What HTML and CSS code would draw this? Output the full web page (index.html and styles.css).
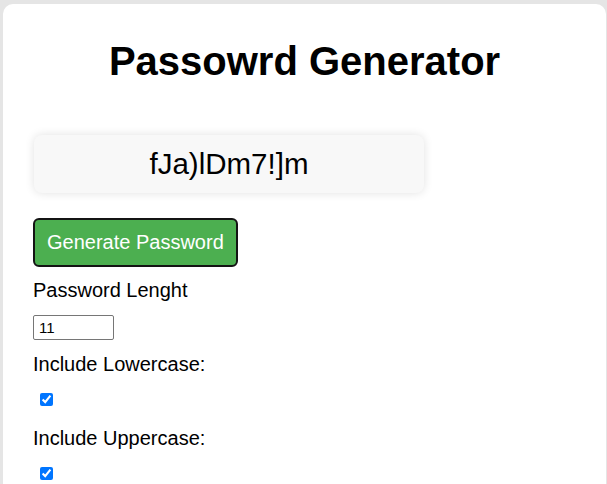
FILE: index.html
```html
<!DOCTYPE html>
<html lang="en">
<head>
<meta charset="UTF-8">
<title>Password Generator</title>
<link rel="stylesheet" href="styles.css">
</head>
<body>
<main class="card">
  <h1 class="title">Passowrd Generator</h1>
  <div class="display">fJa)lDm7!]m</div>
  <button class="generate" type="button">Generate Password</button>
  <label class="label label-first" for="len">Password Lenght</label>
  <input class="length" id="len" type="number" value="11">
  <label class="label" for="lower">Include Lowercase:</label>
  <input class="check" id="lower" type="checkbox" checked>
  <label class="label label-after-check" for="upper">Include Uppercase:</label>
  <input class="check" id="upper" type="checkbox" checked>
</main>
</body>
</html>
```
FILE: styles.css
```css
html, body {
  margin: 0;
  height: 100%;
}
body {
  background: #e5e5e5;
  padding: 4px 1px 0 3px;
  box-sizing: border-box;
  font-family: "Liberation Sans", Arial, sans-serif;
  overflow: hidden;
}
.card {
  background: #ffffff;
  border-radius: 10px;
  padding: 34px 30px 40px 30px;
  min-height: 600px;
  display: flex;
  flex-direction: column;
  align-items: flex-start;
}
.title {
  margin: 0;
  align-self: stretch;
  text-align: center;
  font-size: 40px;
  font-weight: bold;
  line-height: 46px;
  color: #000;
}
.display {
  margin: 51px 0 0 1px;
  width: 390px;
  box-sizing: border-box;
  padding: 12px 10px 12px 10px;
  height: 58px;
  background: #f8f8f8;
  border-radius: 8px;
  box-shadow: 0 0 10px rgba(0, 0, 0, 0.12);
  text-align: center;
  font-size: 29.5px;
  line-height: 34px;
  color: #000;
}
.generate {
  margin-top: 25px;
  background: #4caf50;
  color: #fff;
  border: 2px solid #141414;
  border-radius: 6px;
  font-family: "Liberation Sans", Arial, sans-serif;
  font-size: 20px;
  line-height: 23px;
  padding: 11px 12px;
  height: 49px;
  box-sizing: border-box;
  white-space: nowrap;
  cursor: pointer;
}
.label {
  display: block;
  margin-top: 13px;
  font-size: 20px;
  line-height: 23px;
  color: #000;
}
.label-first {
  margin-top: 12px;
}
.label-after-check {
  margin-top: 21px;
}
.length {
  margin: 13px 0 0 0;
  width: 81px;
  height: 25px;
  box-sizing: border-box;
  border: 1px solid #767676;
  border-radius: 2px;
  padding: 1px 5px;
  font-family: "Liberation Sans", Arial, sans-serif;
  font-size: 15px;
  color: #000;
}
.check {
  margin: 17px 0 0 7px;
  width: 13px;
  height: 13px;
  accent-color: #0075ff;
}
```
